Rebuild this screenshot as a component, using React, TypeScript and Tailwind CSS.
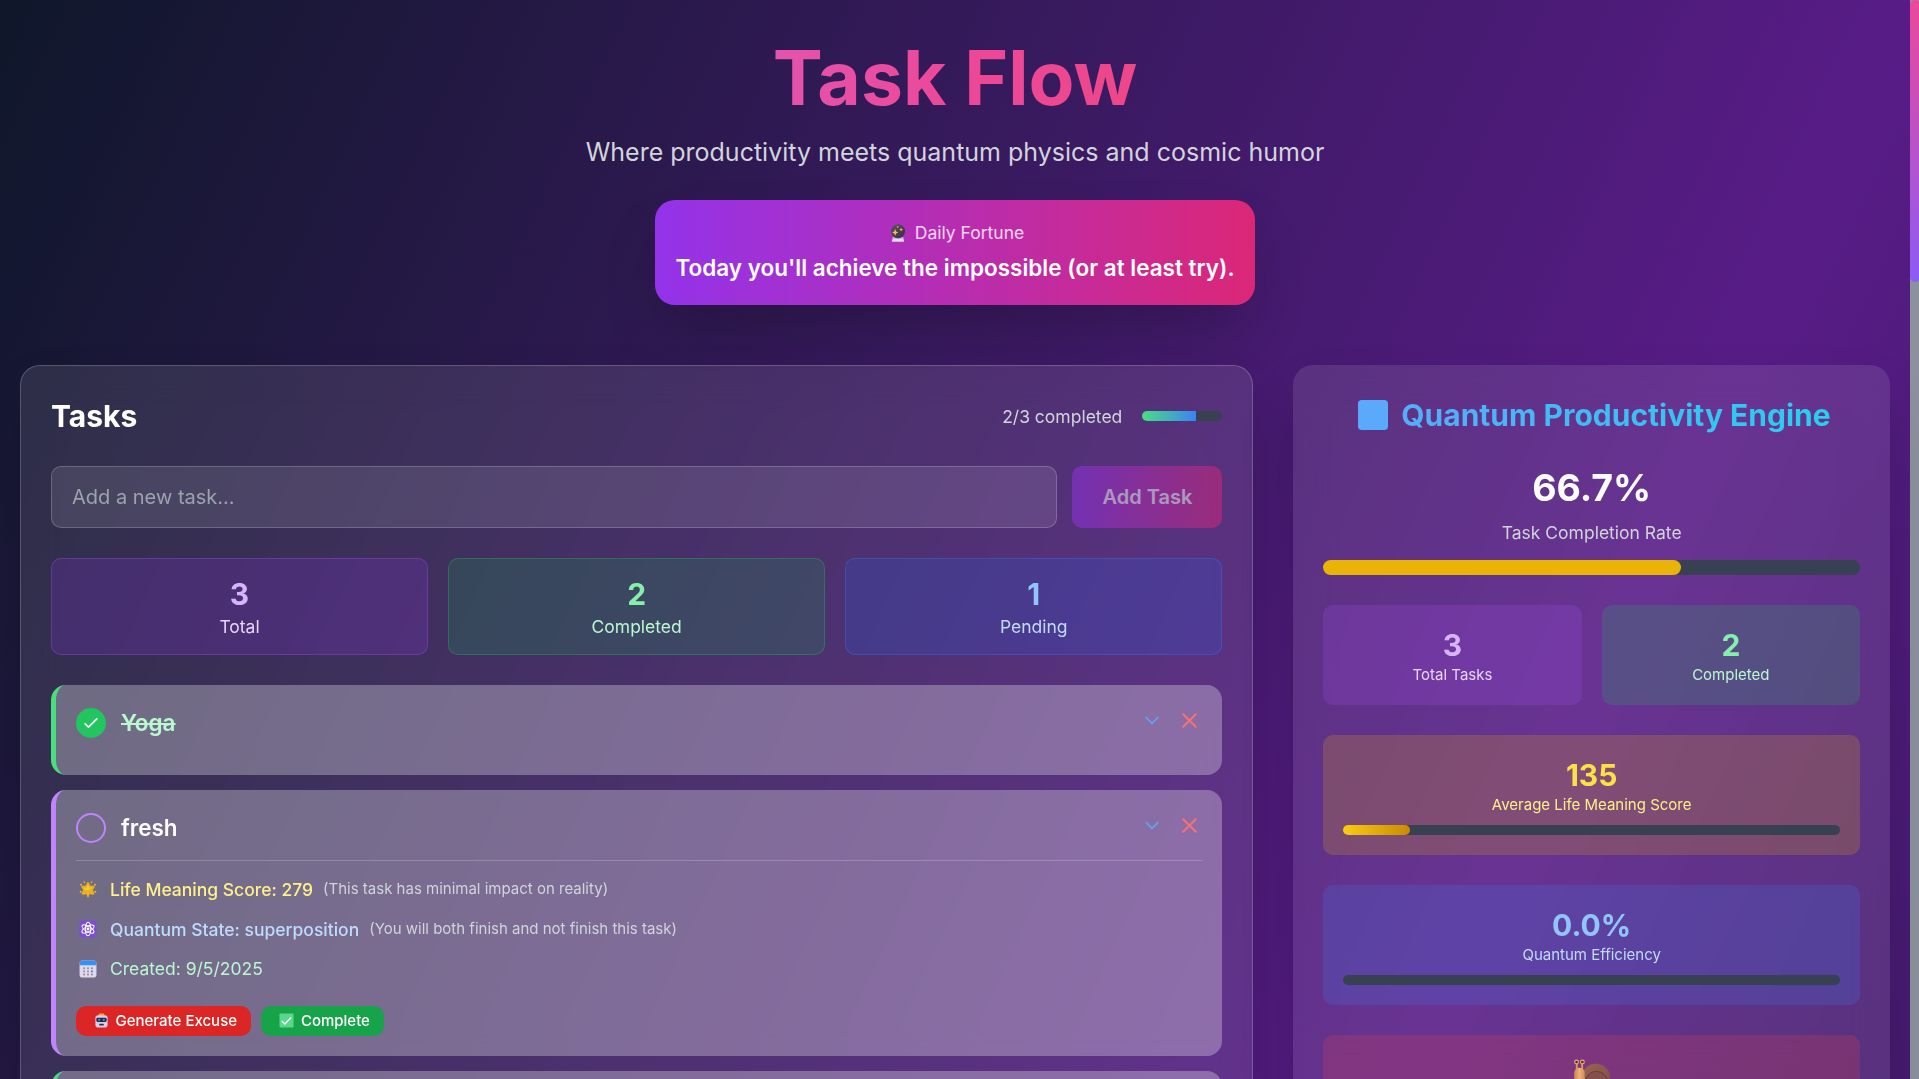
import type { ReactNode } from 'react';

type Task = { title: string; done: boolean; open?: boolean };

const tasks: Task[] = [
  { title: 'Yoga', done: true },
  { title: 'fresh', done: false, open: true },
  { title: '', done: true },
];

function CrystalBall() {
  return (
    <svg viewBox="0 0 32 32" className="h-[14.400px] w-[14.400px]">
      <defs>
        <linearGradient id="ball" x1="0" y1="0" x2="1" y2="1">
          <stop offset="0" stopColor="#5b5363" />
          <stop offset="1" stopColor="#332d48" />
        </linearGradient>
      </defs>
      <path d="M7 23h18l2 8.500H5z" fill="#e3dbee" />
      <path d="M8 23h16l1 3H7z" fill="#b9a6cf" />
      <circle cx="16" cy="13" r="12.500" fill="url(#ball)" />
      <path d="M11 9l1.700 4.300 3.800 1.700-3.800 1.700L11 21l-1.700-4.300L5.500 15l3.800-1.700z" fill="#fcb84a" />
      <path d="M21.500 6.500l1 2.500 2.500 1-2.500 1-1 2.500-1-2.500-2.500-1 2.500-1z" fill="#fcb84a" />
      <circle cx="15.500" cy="5" r="1.600" fill="#f59e4a" />
    </svg>
  );
}

function GlowStar() {
  return (
    <svg viewBox="0 0 32 32" className="h-[14.400px] w-[14.400px]">
      <path
        d="M16 5.500l3.200 6.300 7 .2-3.600 5.600 3 6.700-7-1.200L16 27l-2.800-3.900-6.800 1.200 3-6.700L5.800 12l7-.2z"
        fill="#e8b321"
        stroke="#e8b321"
        strokeWidth="3.500"
        strokeLinejoin="round"
      />
      <path d="M16 8l2 5 5 .6-4 3.400-8 1-2-4 5-1z" fill="#f5c93b" />
      <g fill="#f2ba2b">
        <path d="M8 1l3.500 3.500L9 6zM24 1l-3.500 3.500L23 6zM14.500 28.500h3L16 32z" />
        <circle cx="3.500" cy="8.500" r="1.700" />
        <circle cx="28.500" cy="8.500" r="1.700" />
        <circle cx="3" cy="21" r="1.800" />
        <circle cx="29" cy="21" r="1.800" />
      </g>
    </svg>
  );
}

function Atom() {
  return (
    <svg viewBox="0 0 32 32" className="h-[14.400px] w-[14.400px]">
      <rect x="1" y="1" width="30" height="30" rx="3" fill="#7d4fd0" />
      <g fill="none" stroke="#fff" strokeWidth="1.800">
        <ellipse cx="16" cy="16" rx="4.800" ry="12" />
        <ellipse cx="16" cy="16" rx="4.800" ry="12" transform="rotate(60 16 16)" />
        <ellipse cx="16" cy="16" rx="4.800" ry="12" transform="rotate(120 16 16)" />
      </g>
      <circle cx="16" cy="16" r="2.600" fill="#fff" />
    </svg>
  );
}

function Calendar() {
  const dots = [13, 18.5, 24];
  return (
    <svg viewBox="0 0 32 32" className="h-[14.400px] w-[14.400px]">
      <rect x="1" y="1" width="30" height="30" rx="5" fill="#e1d8ec" />
      <path d="M6 1h20a5 5 0 0 1 5 5v3.500H1V6a5 5 0 0 1 5-5z" fill="#3393f5" />
      {dots.map((y) =>
        [9, 16, 23].map((x) => (
          <rect
            key={`${x}-${y}`}
            x={x - 1.7}
            y={y}
            width="3.400"
            height="3.400"
            rx="1"
            fill={x === 23 && y === 18.5 ? '#0f8bf5' : '#9a8fa8'}
          />
        )),
      )}
    </svg>
  );
}

function Robot() {
  return (
    <svg viewBox="0 0 32 32" className="h-[12px] w-[12px]">
      <path d="M11 1h10l2 5H9z" fill="#f5a623" />
      <rect x="1" y="7" width="3" height="11" rx="1.500" fill="#e0205a" />
      <rect x="28" y="7" width="3" height="11" rx="1.500" fill="#e0205a" />
      <rect x="3" y="5" width="26" height="26" rx="6" fill="#dccfe6" />
      <rect x="5" y="10" width="22" height="9" rx="3" fill="#2b2444" />
      <rect x="9" y="12" width="4" height="5" rx="1.500" fill="#2a9df4" />
      <rect x="19" y="12" width="4" height="5" rx="1.500" fill="#2a9df4" />
      <rect x="11" y="23" width="10" height="3.500" rx="1" fill="#3a3050" />
    </svg>
  );
}

function CheckBoxMark() {
  return (
    <svg viewBox="0 0 32 32" className="h-[12px] w-[12px]">
      <rect x="1" y="1" width="30" height="30" rx="2" fill="#5bd68d" />
      <path d="M6 17l6.500 6.500L26 9.500" fill="none" stroke="#fff" strokeWidth="3" />
    </svg>
  );
}

function Snail() {
  return (
    <svg viewBox="0 0 32 32" className="h-[30px] w-[30px]">
      <defs>
        <linearGradient id="shell" x1="0" y1="0" x2="1" y2="1">
          <stop offset="0" stopColor="#9a6650" />
          <stop offset="1" stopColor="#7a4a4a" />
        </linearGradient>
        <linearGradient id="body" x1="0" y1="0" x2="1" y2="0">
          <stop offset="0" stopColor="#c98750" />
          <stop offset=".5" stopColor="#eeb07c" />
          <stop offset="1" stopColor="#d08c58" />
        </linearGradient>
      </defs>
      <circle cx="19.500" cy="16.500" r="12.500" fill="url(#shell)" />
      <circle cx="20" cy="20" r="9.500" fill="#85504c" stroke="#6b3c38" strokeWidth=".8" />
      <path d="M3.200 3v6M7.800 3v6" stroke="#d99a5e" strokeWidth="1.600" />
      <path d="M1 11.500a4.500 4 0 0 1 9 0V30H6a5 5 0 0 1-5-5z" fill="url(#body)" />
      <path d="M6 26h25v4H6z" fill="#d9965f" />
      <circle cx="3" cy="2.600" r="2.100" fill="#e8b070" />
      <circle cx="8" cy="2.600" r="2.100" fill="#e8b070" />
      <circle cx="3" cy="2.600" r="1.100" fill="#4a2a20" />
      <circle cx="8" cy="2.600" r="1.100" fill="#4a2a20" />
    </svg>
  );
}

function Emoji({ className, children }: { className: string; children: ReactNode }) {
  return <span className={`flex shrink-0 items-center justify-center ${className}`}>{children}</span>;
}

function StrokeIcon({ d, className }: { d: string; className: string }) {
  return (
    <svg
      viewBox="0 0 24 24"
      fill="none"
      stroke="currentColor"
      strokeWidth={2}
      strokeLinecap="round"
      strokeLinejoin="round"
      className={className}
    >
      <path d={d} />
    </svg>
  );
}

function TaskCard({ task }: { task: Task }) {
  return (
    <div
      className={`rounded-xl border-l-4 bg-white/29 p-4 ${task.done ? 'border-[#4ade80]' : 'border-[#c084fc]'}`}
    >
      <div className="mb-3 flex h-7 items-start justify-between">
        <div className="flex items-center gap-3">
          {task.done ? (
            <button className="mt-[.800px] flex h-6 w-6 items-center justify-center rounded-full bg-[#22c55e] text-white">
              <StrokeIcon d="M5 13l4 4L19 7" className="h-4 w-4" />
            </button>
          ) : (
            <button className="mt-[.800px] h-6 w-6 rounded-full border-2 border-[#c084fc]" />
          )}
          <h3
            className={`text-lg font-semibold ${task.done ? 'text-[#bbf7d0] line-through' : 'text-white'}`}
          >
            {task.title}
          </h3>
        </div>
        <div className="mt-[.300px] flex items-center gap-2">
          <button className="p-1 text-[#60a5fa]">
            <StrokeIcon d="M19 9l-7 7-7-7" className="h-4 w-4" />
          </button>
          <button className="text-[#f87171]">
            <StrokeIcon d="M6 18L18 6M6 6l12 12" className="h-5 w-5" />
          </button>
        </div>
      </div>
      {task.open && (
        <div className="space-y-3 border-t border-white/20 pt-3">
          <div className="flex h-5 items-center gap-2">
            <Emoji className="w-[19.200px]"><GlowStar /></Emoji>
            <span className="pt-[1.200px] text-sm font-medium text-[#fef08a]">Life Meaning Score: 279</span>
            <span className="pt-[1.200px] text-xs text-[#d1d5db]">(This task has minimal impact on reality)</span>
          </div>
          <div className="flex h-5 items-center gap-2">
            <Emoji className="w-[19.200px]"><Atom /></Emoji>
            <span className="pt-[1.200px] text-sm font-medium text-[#bfdbfe]">Quantum State: superposition</span>
            <span className="pt-[1.200px] text-xs text-[#d1d5db]">(You will both finish and not finish this task)</span>
          </div>
          <div className="flex h-5 items-center gap-2">
            <Emoji className="w-[19.200px]"><Calendar /></Emoji>
            <span className="text-sm text-[#bbf7d0]">Created: 9/5/2025</span>
          </div>
          <div className="flex gap-2 pt-2">
            <button className="flex items-center gap-[3.100px] rounded-lg bg-[#dc2626] py-1 pr-[11.500px] pl-3 text-xs font-medium text-white">
              <Emoji className="w-[16.500px]"><Robot /></Emoji>
              Generate Excuse
            </button>
            <button className="flex items-center gap-[3.100px] rounded-lg bg-[#16a34a] py-1 pr-[11.500px] pl-3 text-xs font-medium text-white">
              <Emoji className="w-[16.500px]"><CheckBoxMark /></Emoji>
              Complete
            </button>
          </div>
        </div>
      )}
    </div>
  );
}

function Stat({ value, label, box, num, text }: { value: string; label: string; box: string; num: string; text: string }) {
  return (
    <div className={`rounded-lg border p-3 text-center ${box}`}>
      <div className={`-mb-[.800px] text-2xl leading-[32.800px] font-bold ${num}`}>{value}</div>
      <div className={`text-sm ${text}`}>{label}</div>
    </div>
  );
}

function Header() {
  return (
    <header className="mb-8 py-4 text-center">
      <h1 className="mb-4 bg-[linear-gradient(to_right,#c084fc,#ec4899,#ef4444)] bg-clip-text text-6xl leading-none font-bold text-transparent">
        Task Flow
      </h1>
      <p className="mb-6 text-xl text-[#d1d5db]">Where productivity meets quantum physics and cosmic humor</p>
      <div className="flex justify-center">
        <div className="rounded-2xl bg-[linear-gradient(to_right,#9333ea,#db2777)] p-4 shadow-2xl">
          <div className="mb-1 flex items-center justify-center gap-1 text-sm text-white/80">
            <Emoji className="w-[19.200px]"><CrystalBall /></Emoji>
            Daily Fortune
          </div>
          <div className="text-lg font-semibold text-white">Today you'll achieve the impossible (or at least try).</div>
        </div>
      </div>
    </header>
  );
}

function TasksPanel() {
  return (
    <section className="col-span-2 rounded-2xl border border-white/20 bg-white/10 p-6 shadow-2xl backdrop-blur-lg">
      <div className="mb-6 flex h-8 items-center justify-between">
        <h2 className="pt-[1.600px] text-2xl font-bold text-white">Tasks</h2>
        <div className="flex items-center gap-4">
          <span className="pt-[1.200px] text-sm text-[#d1d5db]">2/3 completed</span>
          <div className="h-2 w-16 overflow-hidden rounded-full bg-[#374151]">
            <div className="h-full w-2/3 bg-[linear-gradient(to_right,#4ade80,#3b82f6)]" />
          </div>
        </div>
      </div>
      <div className="mb-6 flex gap-3">
        <input
          className="min-w-0 flex-1 rounded-lg border border-white/20 bg-white/10 px-4 py-3 text-base text-white placeholder:text-[#9ca3af]"
          placeholder="Add a new task..."
        />
        <button className="rounded-lg bg-[linear-gradient(to_right,#9333ea,#db2777)] px-6 py-3 font-semibold text-white opacity-50">
          Add Task
        </button>
      </div>
      <div className="mb-6 grid grid-cols-3 gap-4">
        <Stat value="3" label="Total" box="border-[#a855f7]/30 bg-[#9333ea]/20" num="text-[#d8b4fe]" text="text-[#e9d5ff]" />
        <Stat value="2" label="Completed" box="border-[#22c55e]/30 bg-[#16a34a]/20" num="text-[#86efac]" text="text-[#bbf7d0]" />
        <Stat value="1" label="Pending" box="border-[#3b82f6]/30 bg-[#2563eb]/20" num="text-[#93c5fd]" text="text-[#bfdbfe]" />
      </div>
      <div className="space-y-3">
        {tasks.map((t, i) => (
          <TaskCard key={i} task={t} />
        ))}
      </div>
    </section>
  );
}

function Metric({ value, label, num, text }: { value: string; label: string; num: string; text: string }) {
  return (
    <>
      <div className={`-mb-[.800px] text-2xl leading-[32.800px] font-bold ${num}`}>{value}</div>
      <div className={`text-xs ${text}`}>{label}</div>
    </>
  );
}

function EnginePanel() {
  return (
    <section className="rounded-2xl bg-white/10 p-6 text-center shadow-2xl backdrop-blur-lg">
      <div className="mb-6 flex h-8 items-center justify-center gap-[6px] bg-[linear-gradient(to_right,#60a5fa,#22d3ee)] bg-clip-text text-2xl font-bold text-transparent">
        <span className="flex w-[32.900px] justify-center">
          <span className="h-6 w-6 rounded-[3px] bg-[#5ba9fa]" />
        </span>
        <span className="pt-[1.600px]">Quantum Productivity Engine</span>
      </div>
      <div className="mb-6">
        <div className="mb-2 text-3xl leading-9 font-bold text-white">66.7%</div>
        <div className="mb-3 text-sm text-[#d1d5db]">Task Completion Rate</div>
        <div className="h-3 rounded-full bg-[#374151]">
          <div className="h-3 w-[66.700%] rounded-full bg-[#eab308]" />
        </div>
      </div>
      <div className="mb-6 grid grid-cols-2 gap-4">
        <div className="rounded-lg bg-[#a855f7]/20 p-4">
          <Metric value="3" label="Total Tasks" num="text-[#d8b4fe]" text="text-[#e9d5ff]" />
        </div>
        <div className="rounded-lg bg-[#22c55e]/20 p-4">
          <Metric value="2" label="Completed" num="text-[#86efac]" text="text-[#bbf7d0]" />
        </div>
      </div>
      <div className="mb-6 rounded-lg bg-[#eab308]/20 p-4">
        <Metric value="135" label="Average Life Meaning Score" num="text-[#fde047]" text="text-[#fef08a]" />
        <div className="mt-2 h-2 rounded-full bg-[#374151]">
          <div className="h-2 w-[13.500%] rounded-full bg-[linear-gradient(to_right,#facc15,#ca8a04)]" />
        </div>
      </div>
      <div className="mb-6 rounded-lg bg-[#3b82f6]/20 p-4">
        <Metric value="0.0%" label="Quantum Efficiency" num="text-[#93c5fd]" text="text-[#bfdbfe]" />
        <div className="mt-2 h-2 rounded-full bg-[#374151]" />
      </div>
      <div className="rounded-lg bg-[#ef4444]/20 p-4">
        <div className="flex h-32 items-start justify-center pt-[3px]">
          <Snail />
        </div>
      </div>
    </section>
  );
}

export default function App() {
  return (
    <div className="flex h-screen overflow-hidden font-['Inter',sans-serif]">
      <main className="min-w-0 flex-1">
        <div className="flex h-[3309px] flex-col bg-[linear-gradient(to_bottom_right,#0f172a,#581c87,#0f172a)] p-4 [zoom:1.25]">
          <Header />
          <div className="grid flex-1 grid-cols-3 gap-8">
            <TasksPanel />
            <EnginePanel />
          </div>
        </div>
      </main>
      <div className="w-[9px] shrink-0 overflow-hidden bg-[#8b929c]">
        <div className="h-[282px] w-[10px] rounded-[5px] bg-[linear-gradient(to_bottom,#ec4899,#8b5cf6)]" />
      </div>
    </div>
  );
}
